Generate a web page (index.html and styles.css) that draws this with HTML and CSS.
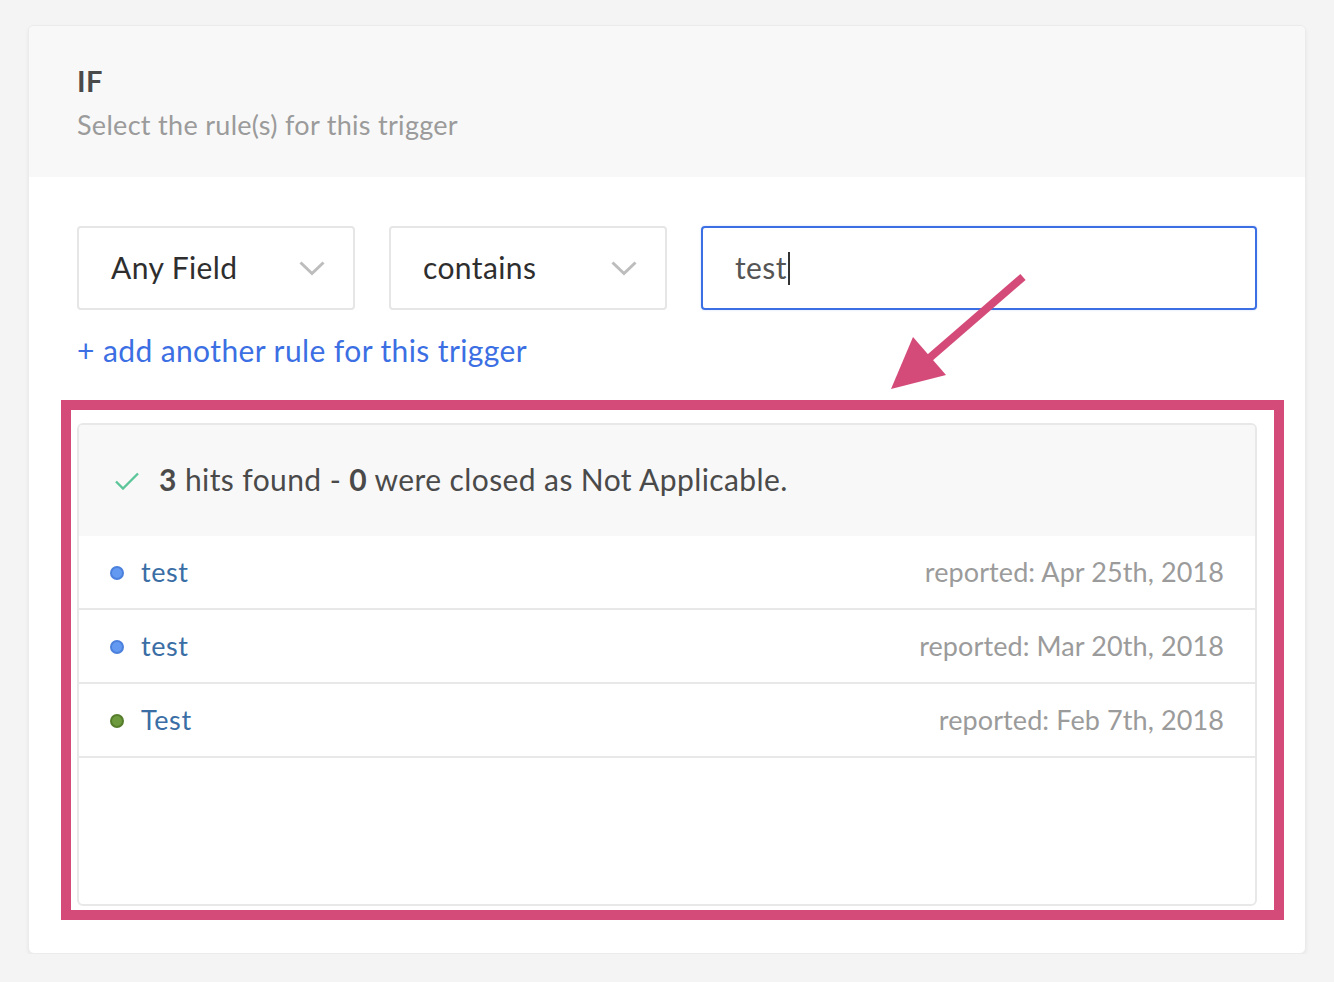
FILE: index.html
```html
<!DOCTYPE html>
<html lang="en">
<head>
<meta charset="utf-8">
<title>Trigger rules</title>
<link rel="stylesheet" href="styles.css">
</head>
<body>
<section class="card">
  <header class="card-head">
    <h2 class="card-title">IF</h2>
    <p class="card-sub">Select the rule(s) for this trigger</p>
  </header>
  <div class="card-body">
    <div class="rule-row">
      <div class="select">
        <span>Any Field</span>
        <svg class="chev" width="26" height="15" viewBox="0 0 26 15"><path d="M1.5 1.5 L13 12.5 L24.5 1.5" fill="none" stroke="#bdbdbd" stroke-width="3"/></svg>
      </div>
      <div class="select">
        <span>contains</span>
        <svg class="chev" width="26" height="15" viewBox="0 0 26 15"><path d="M1.5 1.5 L13 12.5 L24.5 1.5" fill="none" stroke="#bdbdbd" stroke-width="3"/></svg>
      </div>
      <div class="input"><span>test</span><span class="caret"></span></div>
    </div>
    <a class="add-rule" href="#">+ add another rule for this trigger</a>
    <div class="results">
      <div class="results-head">
        <svg class="check" width="24" height="18" viewBox="0 0 24 18"><path d="M1 9.5 L8 16.5 L23 1.5" fill="none" stroke="#5cc599" stroke-width="2.4"/></svg>
        <span><b>3</b> hits found - <b>0</b> were closed as Not Applicable.</span>
      </div>
      <ul class="hits">
        <li class="hit"><span class="dot dot-blue"></span><a href="#" class="hit-name">test</a><span class="hit-date">reported: Apr 25th, 2018</span></li>
        <li class="hit"><span class="dot dot-blue"></span><a href="#" class="hit-name">test</a><span class="hit-date">reported: Mar 20th, 2018</span></li>
        <li class="hit"><span class="dot dot-green"></span><a href="#" class="hit-name">Test</a><span class="hit-date">reported: Feb 7th, 2018</span></li>
      </ul>
      <div class="results-fill"></div>
    </div>
    <div class="highlight"></div>
    <svg class="arrow" width="150" height="130" viewBox="0 0 150 130">
      <line x1="143" y1="8" x2="46" y2="92" stroke="#d44b7a" stroke-width="8"/>
      <polygon points="33,68 66,106 11,120" fill="#d44b7a"/>
    </svg>
  </div>
</section>
</body>
</html>
```
FILE: styles.css
```css
* { box-sizing: border-box; }
html, body { margin: 0; padding: 0; }
body {
  background: #f4f4f4;
  font-family: Lato, "Open Sans", sans-serif;
  color: #4a4a4a;
  padding: 25px 28px 0;
}
.card {
  background: #fff;
  border: 1px solid #ebebeb;
  border-radius: 6px;
  box-shadow: 0 2px 4px rgba(0,0,0,0.06);
  overflow: hidden;
}
.card-head {
  background: #f8f8f8;
  padding: 35px 48px 0;
  height: 151px;
}
.card-title {
  margin: 0;
  font-size: 29px;
  font-weight: 700;
  line-height: 40px;
  color: #4a4a4a;
  letter-spacing: 0.5px;
}
.card-sub {
  margin: 6px 0 0;
  font-size: 27px;
  line-height: 36px;
  letter-spacing: 0.3px;
  color: #9b9b9b;
}
.card-body {
  position: relative;
  padding: 49px 48px 47px;
}
.rule-row {
  display: grid;
  grid-template-columns: 278px 278px 1fr;
  gap: 34px;
}
.select, .input {
  height: 84px;
  border: 2px solid #e6e6e6;
  border-radius: 4px;
  display: flex;
  align-items: center;
  padding: 0 28px 2px 32px;
  font-size: 30px;
  letter-spacing: 0.4px;
  color: #2e2e2e;
}
.select span { flex: 1; }
.chev { display: block; margin-top: 2px; }
.input {
  border-color: #3b6fe3;
  color: #555;
  box-shadow: 0 0 2px rgba(59,111,227,0.3);
}
.caret {
  display: inline-block;
  width: 2px;
  height: 33px;
  background: #333;
  margin-left: 1px;
  margin-top: 2px;
}
.add-rule {
  display: block;
  margin-top: 20px;
  font-size: 30px;
  line-height: 40px;
  letter-spacing: 0.4px;
  color: #3b6fe3;
  text-decoration: none;
  width: max-content;
}
.results {
  margin-top: 53px;
  border: 2px solid #e8e8e8;
  border-radius: 6px;
  overflow: hidden;
}
.results-head {
  background: #f8f8f8;
  height: 111px;
  display: flex;
  align-items: center;
  padding: 0 0 3px 36px;
  gap: 20px;
  font-size: 30px;
  letter-spacing: 0.4px;
  color: #4a4a4a;
}
.results-head b { font-weight: 700; }
.check { display: block; margin-top: 4px; }
.hits { list-style: none; margin: 0; padding: 0; }
.hit {
  height: 74px;
  border-bottom: 2px solid #e8e8e8;
  display: flex;
  align-items: center;
  padding: 0 31px 2px;
  font-size: 27px;
}
.dot {
  width: 14px;
  height: 14px;
  border-radius: 50%;
  margin-right: 17px;
  margin-top: 3px;
  flex: none;
}
.dot-blue { background: #6399f0; border: 2px solid #4c80dd; }
.dot-green { background: #6c9a3c; border: 2px solid #557d2c; }
.hit-name {
  color: #3a6ea5;
  text-decoration: none;
  letter-spacing: 0.6px;
  flex: 1;
}
.hit-date { color: #9b9b9b; letter-spacing: 0.1px; }
.results-fill { height: 146px; }
.highlight {
  position: absolute;
  left: 32px;
  top: 223px;
  width: 1223px;
  height: 520px;
  border: 10px solid #d44b7a;
  pointer-events: none;
}
.arrow {
  position: absolute;
  left: 851px;
  top: 92px;
}
```
